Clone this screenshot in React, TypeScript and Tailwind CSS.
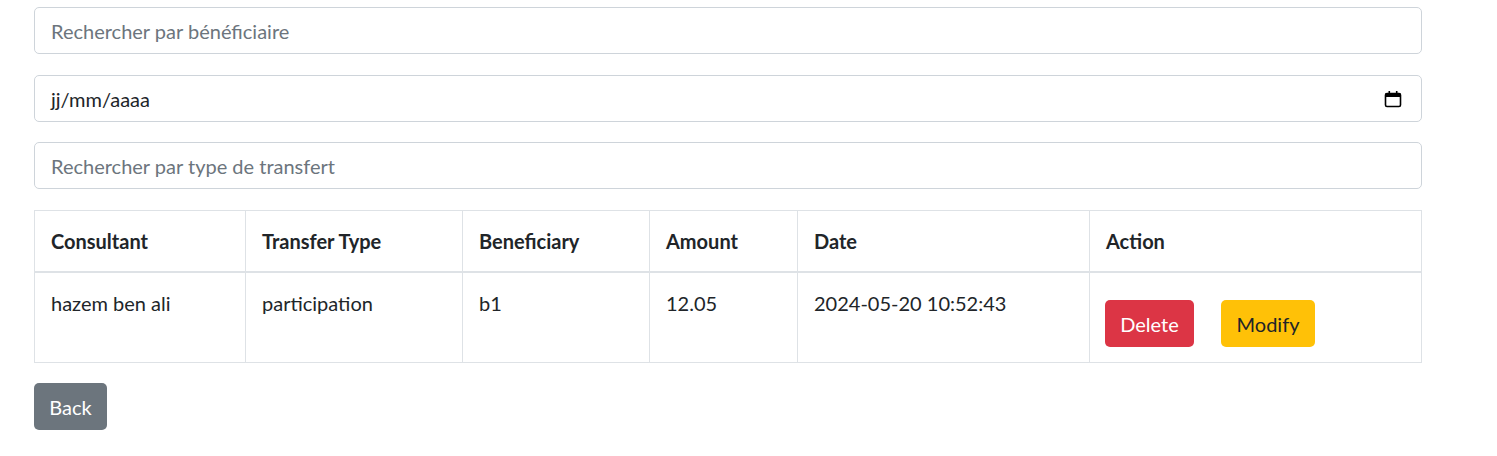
import React from 'react'

const font = { fontFamily: 'Lato, "Open Sans", "Liberation Sans", sans-serif' }

function CalendarIcon() {
  return (
    <svg width="18" height="18" viewBox="0 0 18 18" className="text-black">
      <rect x="1.5" y="3.5" width="15" height="13" rx="1.5" fill="none" stroke="currentColor" strokeWidth="1.6" />
      <rect x="1.5" y="3.5" width="15" height="3.5" fill="currentColor" />
      <rect x="4.5" y="1" width="1.6" height="4" fill="currentColor" />
      <rect x="11.9" y="1" width="1.6" height="4" fill="currentColor" />
    </svg>
  )
}

export default function App() {
  const rows = [
    { consultant: 'hazem ben ali', type: 'participation', beneficiary: 'b1', amount: '12.05', date: '2024-05-20 10:52:43' },
  ]

  return (
    <div className="min-h-screen bg-white text-[#212529]" style={font}>
      <div className="w-[1388px] ml-[34px] pt-[7px]">
        <input
          type="text"
          placeholder="Rechercher par bénéficiaire"
          className="block w-full h-[47px] px-[16px] text-[20px] leading-[30px] text-[#495057] border border-[#ced4da] rounded-[5px] placeholder:text-[#6c757d] outline-none"
        />
        <div className="mt-[21px] flex items-center justify-between w-full h-[47px] px-[16px] text-[20px] leading-[30px] text-[#212529] border border-[#ced4da] rounded-[5px]">
          <span>jj/mm/aaaa</span>
          <span className="mr-[3px] flex items-center"><CalendarIcon /></span>
        </div>
        <input
          type="text"
          placeholder="Rechercher par type de transfert"
          className="mt-[20px] block w-full h-[47px] px-[16px] text-[20px] leading-[30px] text-[#495057] border border-[#ced4da] rounded-[5px] placeholder:text-[#6c757d] outline-none"
        />

        <table className="mt-[21px] w-full border-collapse text-[20px] leading-[30px]">
          <thead>
            <tr>
              <th className="w-[211px] text-left font-bold px-[16px] py-[15px] border border-[#dee2e6] border-b-2">Consultant</th>
              <th className="w-[217px] text-left font-bold px-[16px] py-[15px] border border-[#dee2e6] border-b-2">Transfer Type</th>
              <th className="w-[187px] text-left font-bold px-[16px] py-[15px] border border-[#dee2e6] border-b-2">Beneficiary</th>
              <th className="w-[148px] text-left font-bold px-[16px] py-[15px] border border-[#dee2e6] border-b-2">Amount</th>
              <th className="w-[292px] text-left font-bold px-[16px] py-[15px] border border-[#dee2e6] border-b-2">Date</th>
              <th className="text-left font-bold px-[16px] py-[15px] border border-[#dee2e6] border-b-2">Action</th>
            </tr>
          </thead>
          <tbody>
            {rows.map((r, i) => (
              <tr key={i}>
                <td className="align-top px-[16px] py-[15px] border border-[#dee2e6]">{r.consultant}</td>
                <td className="align-top px-[16px] py-[15px] border border-[#dee2e6]">{r.type}</td>
                <td className="align-top px-[16px] py-[15px] border border-[#dee2e6]">{r.beneficiary}</td>
                <td className="align-top px-[16px] py-[15px] border border-[#dee2e6]">{r.amount}</td>
                <td className="align-top px-[16px] py-[15px] border border-[#dee2e6]">{r.date}</td>
                <td className="align-top px-[15px] py-[15px] border border-[#dee2e6]">
                  <div className="mt-[12px] flex gap-[27px]">
                    <button className="h-[47px] w-[89px] rounded-[5px] bg-[#dc3545] text-white text-[20px] leading-[30px]">Delete</button>
                    <button className="h-[47px] w-[94px] rounded-[5px] bg-[#ffc107] text-[#212529] text-[20px] leading-[30px]">Modify</button>
                  </div>
                </td>
              </tr>
            ))}
          </tbody>
        </table>

        <button className="mt-[20px] h-[47px] w-[73px] rounded-[5px] bg-[#6c757d] text-white text-[20px] leading-[30px]">Back</button>
      </div>
    </div>
  )
}
